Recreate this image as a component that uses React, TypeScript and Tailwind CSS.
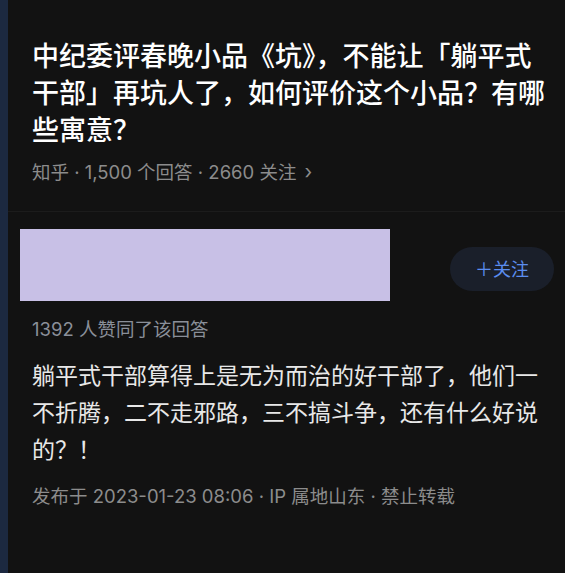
const cjk = { fontFamily: '"Inter", "Noto Sans CJK SC", sans-serif' };

export default function App() {
  return (
    <div className="flex h-[573px] w-[565px] overflow-hidden bg-[#121212]" style={cjk}>
      {/* left edge of the page behind */}
      <div className="w-2 flex-shrink-0 bg-[#1c2940]"></div>

      <div className="flex flex-1 flex-col">
        {/* Question header */}
        <div className="border-b border-[#1c1c1c] pt-[38px] pr-[10px] pb-[26px] pl-[24px]">
          <h1 className="text-[27px] font-medium leading-[37px] text-white">
            中纪委评春晚小品《坑》，不能让「躺平式干部」再坑人了，如何评价这个小品？有哪些寓意？
          </h1>
          <p className="mt-[10px] flex items-center text-[18.5px] leading-[26px] text-[#8c8c8c]">
            知乎 · 1,500 个回答 · 2660 关注
            <span className="ml-2 text-[20px]">›</span>
          </p>
        </div>

        {/* Answer */}
        <div className="flex flex-col pt-[17px]">
          <div className="flex items-start justify-between pr-[11px] pl-[12px]">
            <div className="h-[72px] w-[370px] bg-[#c8c0e6]"></div>
            <button className="mt-[18px] flex h-[44px] w-[104px] items-center justify-center rounded-full bg-[#1a1f2a] text-[18px] text-[#5b8def]">
              ＋关注
            </button>
          </div>

          <p className="mt-[15px] pl-[24px] text-[18.5px] leading-[26px] text-[#8a8f99]">
            1392 人赞同了该回答
          </p>

          <p className="mt-[16px] pr-[14px] pl-[24px] text-[23px] leading-[37px] text-[#e8e8e8]">
            躺平式干部算得上是无为而治的好干部了，他们一不折腾，二不走邪路，三不搞斗争，还有什么好说的？！
          </p>

          <p className="mt-[14px] pl-[24px] text-[18.5px] leading-[26px] text-[#8c8c8c]">
            发布于 2023-01-23 08:06 · IP 属地山东 · 禁止转载
          </p>
        </div>
      </div>
    </div>
  );
}
